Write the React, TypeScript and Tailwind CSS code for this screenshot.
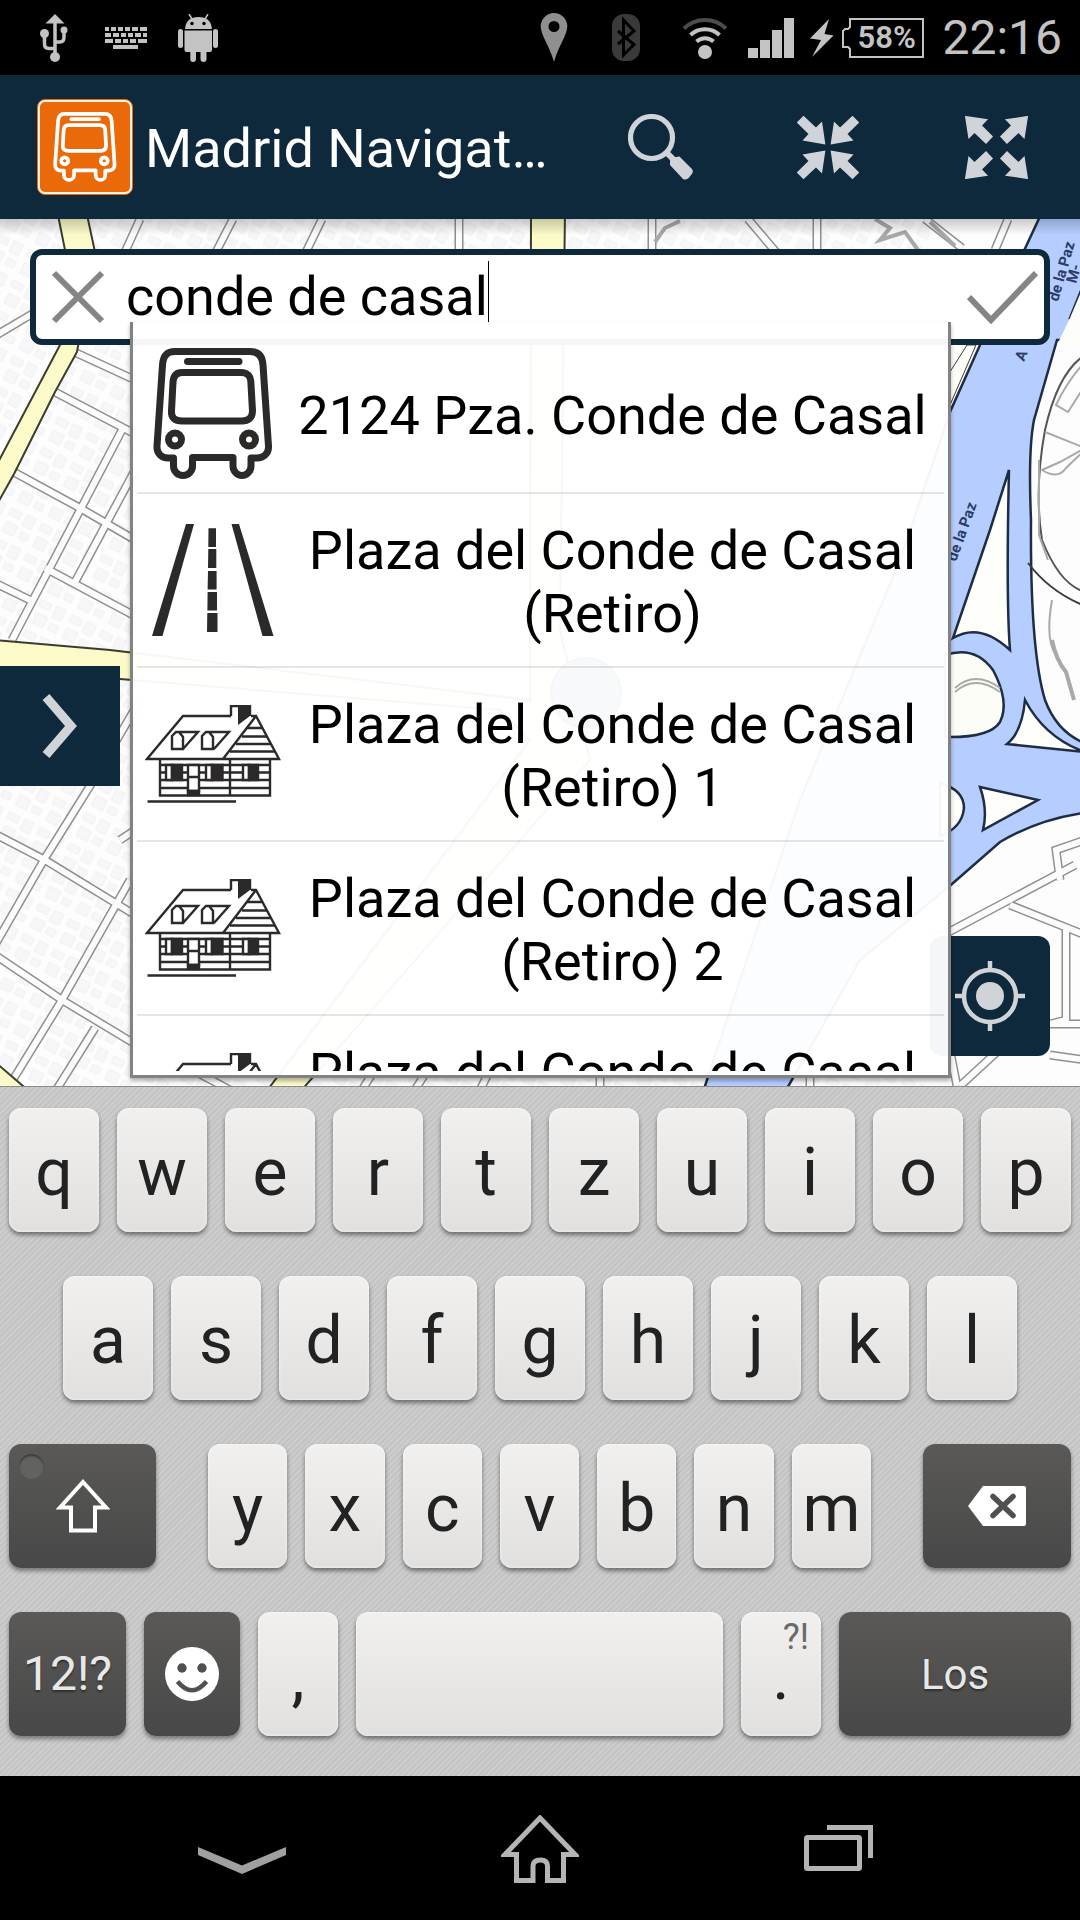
import React, { useState } from 'react';

interface Suggestion {
    kind: 'bus' | 'road' | 'house';
    label: string;
}

const SUGGESTIONS: Suggestion[] = [
    { kind: 'bus', label: '2124 Pza. Conde de Casal' },
    { kind: 'road', label: 'Plaza del Conde de Casal (Retiro)' },
    { kind: 'house', label: 'Plaza del Conde de Casal (Retiro) 1' },
    { kind: 'house', label: 'Plaza del Conde de Casal (Retiro) 2' },
    { kind: 'house', label: 'Plaza del Conde de Casal' },
];

const BusIcon: React.FC<{ className: string }> = ({ className }) => (
    <svg viewBox="0 0 120 131" className={className} fill="none" stroke="currentColor" strokeWidth="7" strokeLinejoin="round">
        <path d="M22 3.5H97C106 3.5 109.5 9 110 17L115.5 98C116 106 110 110 104 110H98V118A9 9.5 0 0 1 80 118V109.5H39.5V118A9.5 9.5 0 0 1 20.5 118V110H15C9 110 3.5 106 4 98L9.5 17C10 9 13 3.5 22 3.5Z" />
        <path d="M34.5 13.5H86" strokeLinecap="round" />
        <path d="M29 24.5H88C95 24.5 97.500 29 97.800 33L99.500 63C99.500 70 95 73 89 73H29C22 73 18 70 18.500 63L20 34C20.500 28 23 24.500 29 24.500Z" />
        <circle cx="22" cy="91.500" r="6.500" />
        <circle cx="96" cy="91.500" r="6.500" />
    </svg>
);

const RoadIcon = () => (
    <svg viewBox="0 0 122 112" className="w-[122px]" fill="currentColor">
        <path d="M34 0H42L10.500 112H0ZM79.500 0H87L121.500 112H110.500Z" />
        <path d="M56.500 4.300H64V23H56.300ZM56.300 25H64.300V44H56ZM56 47H64.600V65.500H55.600ZM55.600 68H65V86.500H55.400ZM55.300 89H65.500V108H55Z" />
    </svg>
);

const HouseIcon = () => (
    <svg viewBox="0 0 136 98" className="w-[136px]" fill="none" stroke="currentColor" strokeWidth="2.400">
        <path d="M86 11H38L2 54H134L111 11H106M111 11L78 54M86 11V1H105V11" />
        <path d="M93 1H105V11L93 20Z" fill="currentColor" stroke="none" />
        <path d="M102 23H117M97 31.500H122M91 39H126M85 46.500H130" />
        <path d="M27 44V31L31 27L34 27L38 32V44ZM31 27H53L38 44M57 44V31L61 27L64 27L68 32V44ZM61 27H84L69 44" />
        <path d="M15 54V90.500H125V54M85 54V90.500M15 60H125M15 67.500H125M15 75H125M15 83H125" />
        <path d="M21 60H27V75H21ZM61 60H67V75H61ZM98 60H104V75H98ZM43 60H54V86H43Z" className="fill-white" />
        <path d="M27 60H37V75H27ZM67 60H77.500V75H67ZM104 60H113V75H104ZM43 86H54V90H43Z" fill="currentColor" />
        <path d="M43 72H54M2.500 96.500H91" />
    </svg>
);

const MapCanvas = () => (
    <svg viewBox="0 219 1080 867" preserveAspectRatio="xMidYMid slice" className="absolute inset-0 size-full bg-[#fdfdfd]" aria-hidden="true">
        <defs>
            <pattern id="plots" width="34" height="34" patternUnits="userSpaceOnUse" patternTransform="rotate(27)">
                <path d="M3 5H15V12H3ZM20 4H30V16H20ZM5 19H17V30H5ZM22 22H31V29H22Z" fill="#f7f7f9" stroke="#f0f0f3" />
            </pattern>
            <linearGradient id="drop" x1="0" y1="0" x2="0" y2="1">
                <stop offset="0" stopColor="#000" stopOpacity=".2" />
                <stop offset="1" stopColor="#000" stopOpacity="0" />
            </linearGradient>
        </defs>
        <rect y="219" width="930" height="867" fill="url(#plots)" />

        {/* narrow streets: grey casing, white core */}
        {['#8f8f8f', '#fcfcfc'].map((stroke, i) => (
            <g key={stroke} fill="none" stroke={stroke} strokeWidth={i === 0 ? 9 : 6}>
                <path d="M70 350L135 380M55 392L135 434M10 470L80 508L135 540M122 430L12 640M135 470L75 582M-5 583L30 600M45 568L135 616M-5 336L32 314" />
                <path d="M140 700L90 786L45 858L-5 945M-5 834L45 860L135 915M130 880L62 1000L14 1078M-5 955L62 1000L135 1044M95 1028L55 1092M120 840L135 830" />
                <path d="M140 219L125 252M233 219L216 252M322 219L306 252M459 215V255M652 215V255M748 219L776 252M817 215V255M925 219L962 248M1008 219L995 250" />
                <path d="M930 942L1075 865M1010 905L1085 935M1066 930V1020L1050 1024H1085M960 1086L1010 1040M940 1000L957 1086M1050 1055L1085 1060M1060 880L1056 850L1085 840" />
                <path d="M200 1074L230 1090M372 1074L362 1090M425 1074L415 1090M488 1074L480 1090M600 1074V1090M810 1074V1090" />
            </g>
        ))}
        <path d="M875 219L890 228L880 240L905 232L918 250M655 242L665 228L680 221M930 222L955 246" fill="none" stroke="#a8a8a8" strokeWidth="4" />

        {/* main avenues */}
        <g fill="#fbfac8" stroke="#3c3c2c" strokeWidth="2">
            <path d="M57 210L66 255L60 345L-5 468V508L14 474L55 392L77 352L95 252L86 210Z" />
            <path d="M531 210H565L560 630L590 760L300 1092H266L530 740L500 710L120 679H-5V640L110 650L530 700Z" />
            <path d="M-5 1062L30 1092H-5Z" />
        </g>

        {/* motorway */}
        <g stroke="#1f2d42" strokeWidth="2.500">
            <path d="M1043 210L980 345L950 412L900 560L800 800L703 1092H785L860 960L952 884L1000 842Q1040 818 1090 812V745Q1058 735 1045 700Q1030 650 1031 520Q1028 450 1034 420L1057 340H1090V318H1070L1090 268V210Z" fill="#b5cdff" />
            <path d="M1009 470L990 530L953 638Q980 622 1010 650Q1006 600 1009 470Z" fill="#fefefa" />
            <path d="M945 655Q975 645 993 670Q1010 702 1000 722Q990 738 945 737Z" fill="#fdfdf8" />
            <path d="M1025 700Q1022 732 1007 744L1085 752Q1045 738 1025 700Z" fill="#fefefa" />
            <path d="M980 787L1038 800L983 830Q988 810 980 787Z" fill="#fefefa" />
            <path d="M940 783Q964 790 964 808Q962 828 940 836Z" fill="#fefefa" />
        </g>
        <path d="M1070 318L1092 266V345H1057Z" fill="#fdfdfa" />
        <path d="M948 375L967 345H976L950 405Z" fill="#fefefa" stroke="#3c3c2c" />
        <path d="M1028 563Q1050 592 1085 606" fill="none" stroke="#3a3a3a" strokeWidth="2" />
        <g fill="none" stroke="#a9a9a9" strokeWidth="2">
            <path d="M1085 355Q1058 372 1045 430Q1034 490 1042 540Q1060 585 1085 592" stroke="#555" />
            <path d="M1085 362Q1068 380 1056 405L1068 412Q1082 390 1085 385M1045 432L1085 448L1060 462L1042 470Q1058 480 1066 468L1085 450" />
            <path d="M1039 460V535L1048 560M1052 600Q1045 640 1056 655M955 692Q975 674 1000 692M955 688Q975 670 1000 688" />
            <path d="M1052 640Q1056 660 1066 672L1074 700" strokeWidth="4" />
        </g>
        <g className="font-[Roboto,sans-serif] text-[15px] font-bold" fill="#2c3c68">
            <text transform="translate(1058 302) rotate(-74)">de la Paz</text>
            <text transform="translate(1076 284) rotate(-74)">M-</text>
            <text transform="translate(1024 362) rotate(-68)">A</text>
            <text transform="translate(956 562) rotate(-70)">de la Paz</text>
        </g>
        <circle cx="586" cy="693" r="35" fill="#4a6076" stroke="#0d293b" strokeWidth="2" />
        <rect y="219" width="1080" height="16" fill="url(#drop)" />
    </svg>
);

const StatusBar = () => (
    <header className="flex h-[75px] items-center justify-between bg-black text-[#c3c3c3]">
        <div className="flex pl-[18px]">
            <span className="flex w-[72px] justify-center">
                <svg viewBox="0 0 28 48" className="h-12 w-7" fill="none" stroke="currentColor" strokeWidth="3.500">
                    <path d="M15 6V44M4.500 20V30Q4.500 34.500 9 34.500H15M24 16V23Q24 28 20 28H15" />
                    <path d="M15 0L24.500 9.500H5.500Z" fill="currentColor" stroke="none" />
                    <circle cx="15" cy="43" r="5" fill="currentColor" stroke="none" />
                    <circle cx="4.500" cy="19.500" r="4.500" fill="currentColor" stroke="none" />
                    <circle cx="24" cy="16" r="3.500" fill="currentColor" stroke="none" />
                </svg>
            </span>
            <span className="flex w-[72px] items-center justify-center">
                <svg viewBox="0 0 42 22" className="w-[42px]" fill="currentColor">
                    <path d="M0 0H4V4H0ZM6 0H11V4H6ZM13 0H18V4H13ZM20 0H25V4H20ZM27 0H33V4H27ZM35 0H42V4H35Z" />
                    <path d="M0 6H6V10H0ZM8 6H14V10H8ZM16 6H21V10H16ZM23 6H28V10H23ZM30 6H36V10H30ZM38 6H42V10H38Z" />
                    <path d="M0 12H8V16H0ZM10 12H16V16H10ZM18 12H23V16H18ZM25 12H31V16H25ZM33 12H42V16H33ZM8 18H33V22H8Z" />
                </svg>
            </span>
            <span className="flex w-[72px] justify-center">
                <svg viewBox="0 0 40 48" className="h-12 w-10" fill="currentColor">
                    <path d="M7 15Q8 3 20.500 3Q33 3 34 15Z" />
                    <path d="M11 0L14 5M30 0L27 5" stroke="currentColor" strokeWidth="1.500" />
                    <path d="M6.500 16.500H34V36Q34 38 32 38H28.500V45Q28.500 48 25.500 48Q22.500 48 22.500 45V38H18V45Q18 48 15 48Q12.300 48 12.300 45V38H8.500Q6.500 38 6.500 36Z" />
                    <rect y="15" width="5" height="19" rx="2.500" />
                    <rect x="35" y="15" width="5" height="19" rx="2.500" />
                    <circle cx="14" cy="9.500" r="1.700" fill="#000" />
                    <circle cx="26" cy="9.500" r="1.700" fill="#000" />
                </svg>
            </span>
        </div>
        <div className="flex items-center pr-[18px]">
            <svg viewBox="0 0 28 49" className="w-7 text-[#8f8f8f]" fill="currentColor">
                <path fillRule="evenodd" d="M14 0A13.300 13.300 0 0 1 27.300 13.300C27.300 22 18 34 14 49C10 34 .7 22 .7 13.300A13.300 13.300 0 0 1 14 0ZM14 8A5.500 5.500 0 1 0 14 19A5.500 5.500 0 1 0 14 8Z" />
            </svg>
            <svg viewBox="0 0 28 47" className="ml-11 w-7" fill="none">
                <rect width="28" height="47" rx="12" fill="#3a3a3a" />
                <path d="M6 17L22 30.500L11.500 41V6L22 17L6 30" stroke="#000" strokeWidth="3" />
            </svg>
            <svg viewBox="0 0 46 43" className="ml-[42px] w-[46px]" fill="none" stroke="currentColor" strokeWidth="4">
                <path d="M2 12.500A30 30 0 0 1 44 12.500" stroke="#4c4c4c" />
                <path d="M8.500 19A21 21 0 0 1 37.500 19M14.500 25.500A12.500 12.500 0 0 1 31.500 25.500" />
                <circle cx="23" cy="36" r="7" fill="currentColor" stroke="none" />
            </svg>
            <svg viewBox="0 0 46 40" className="ml-5 w-[46px]" fill="currentColor">
                <path d="M0 30H10V40H0ZM12 22H22V40H12ZM24 12H34V40H24ZM36 0H46V40H36Z" />
            </svg>
            <svg viewBox="0 0 24 38" className="ml-4 w-6" fill="currentColor">
                <path d="M19 0L0 19.500L11 21L2 38L23.500 16.500L14.500 15Z" />
            </svg>
            <div className="ml-2 grid items-center">
                <svg viewBox="0 0 82 40" className="col-start-1 row-start-1 w-[82px]" fill="none" stroke="currentColor" strokeWidth="2">
                    <path d="M8 1H81V39H8V31L6 29H1V13L3 11H6L8 9Z" />
                </svg>
                <span className="col-start-1 row-start-1 pl-[15px] text-[31px] leading-10 font-semibold">58%</span>
            </div>
            <time className="ml-[18px] text-5xl">22:16</time>
        </div>
    </header>
);

const ActionBar = () => (
    <nav className="flex h-36 items-center bg-[#0d293b] pl-[37px] text-[#d0d4d8]">
        <span className="flex size-24 shrink-0 items-center justify-center rounded-lg border border-[#ea6a0a] bg-[#ea6a0a] text-white outline-2 -outline-offset-3 outline-white/90">
            <BusIcon className="w-16" />
        </span>
        <h1 className="min-w-0 flex-1 truncate pt-1 pl-3 text-[54px] leading-[64px] text-white">Madrid Navigat…</h1>
        <button aria-label="Search" className="flex h-full w-[168px] items-center justify-center">
            <svg viewBox="0 0 65 66" className="w-[65px]" fill="none" stroke="currentColor">
                <circle cx="23.500" cy="23.500" r="21" strokeWidth="5.200" />
                <path d="M38 38L47 47" strokeWidth="6" />
                <path d="M42 44L51.500 42.500L64 55Q66 58 63 61Q59 67 55 65L42 51Z" fill="currentColor" stroke="none" />
            </svg>
        </button>
        <button aria-label="Zoom out" className="flex h-full w-[168px] items-center justify-center">
            <svg viewBox="0 0 62 63" className="w-[62px]" fill="currentColor" stroke="currentColor" strokeWidth="1.500">
                {['', 'matrix(-1 0 0 1 62 0)', 'matrix(1 0 0 -1 0 63)', 'matrix(-1 0 0 -1 62 63)'].map(t => (
                    <path key={t} transform={t} d="M6.500 .8L19 12.500L24.500 7L27.500 27.500L7 24L12.500 18L.8 6.500Z" />
                ))}
            </svg>
        </button>
        <button aria-label="Zoom in" className="flex h-full w-[168px] items-center justify-center">
            <svg viewBox="0 0 63 63" className="w-[63px]" fill="currentColor" stroke="currentColor" strokeWidth="1.500">
                {['', 'matrix(-1 0 0 1 63 0)', 'matrix(1 0 0 -1 0 63)', 'matrix(-1 0 0 -1 63 63)'].map(t => (
                    <path key={t} transform={t} d="M.8 .8L21.500 3.800L16 9.500L27 20.500L21 27L9.500 16L4 21.500Z" />
                ))}
            </svg>
        </button>
    </nav>
);

const SearchPanel = () => {
    const [query, setQuery] = useState('conde de casal');

    return (
        <div className="relative mx-[30px] mt-[30px]">
            <form className="flex h-24 items-center rounded-xl border-6 border-[#0d293b] bg-white" onSubmit={e => e.preventDefault()}>
                <button type="button" aria-label="Clear" onClick={() => setQuery('')} className="flex h-full w-[84px] items-center justify-center text-[#858585]">
                    <svg viewBox="0 0 54 54" className="w-[54px]" stroke="currentColor" strokeWidth="6">
                        <path d="M3 3L51 51M51 3L3 51" />
                    </svg>
                </button>
                <input
                    type="text"
                    aria-label="Search address or stop"
                    value={query}
                    onChange={e => setQuery(e.target.value)}
                    className="field-sizing-content min-w-0 pl-1.5 text-[54px] leading-[64px] text-black caret-transparent outline-none"
                />
                <span className="mb-2 h-16 w-px bg-black" />
                <button type="submit" aria-label="Accept" className="ml-auto flex h-full w-[84px] items-center justify-center text-[#858585]">
                    <svg viewBox="0 0 71 54" className="w-[71px]" fill="none" stroke="currentColor" strokeWidth="6">
                        <path d="M2 27L24 50L69 3" />
                    </svg>
                </button>
            </form>
            <div className="absolute top-[73px] right-[99px] left-[100px] z-20 border-x-3 border-b-3 border-[#828282] bg-white/96 bg-clip-padding px-1 pb-1 shadow-[0_3px_4px_rgba(0,0,0,0.3)]">
                <ul className="max-h-[749px] overflow-hidden">
                    {SUGGESTIONS.map((s, i) => (
                        <li key={s.label} className={i === 0 ? 'border-b-2 border-black/10 pt-3' : 'border-b-2 border-black/10'}>
                            <button className={i === 0 ? 'flex min-h-[158px] w-full px-1 text-[#2b2a29]' : 'flex min-h-[172px] w-full px-1 text-[#2b2a29]'}>
                                <span className="flex w-36 shrink-0 items-center justify-center self-center">
                                    {s.kind === 'bus' && <BusIcon className="w-[120px]" />}
                                    {s.kind === 'road' && <RoadIcon />}
                                    {s.kind === 'house' && <HouseIcon />}
                                </span>
                                <span className={i === 0 ? 'flex-1 self-center pt-1 text-[54px] leading-[63px] text-black' : 'flex-1 pt-[25px] text-[54px] leading-[63px] text-black'}>
                                    {s.label}
                                </span>
                            </button>
                        </li>
                    ))}
                </ul>
            </div>
        </div>
    );
};

const LIGHT_KEY = 'h-31 rounded-xl bg-linear-to-b from-[#f1f0ef] to-[#e1e0df] pt-[5px] text-[66px] leading-[76px] text-[#222] shadow-[0_3px_4px_rgba(0,0,0,0.45),inset_0_0_3px_rgba(255,255,255,0.8)]';
const DARK_KEY = 'h-31 flex items-center justify-center rounded-xl bg-linear-to-b from-[#5a5957] to-[#484848] text-[#e8e8e8] shadow-[0_3px_4px_rgba(0,0,0,0.4)] text-shadow-[0_2px_2px_rgba(0,0,0,0.4)]';

const Keyboard = () => (
    <section aria-label="Keyboard" className="flex flex-col gap-11 border-t border-[#8c8c8c] bg-[#c8c8c8] bg-[repeating-linear-gradient(135deg,#c3c3c3_0px,#c3c3c3_2px,#cdcdcd_2px,#cdcdcd_4px)] px-[9px] pt-[21px] pb-10">
        <div className="flex gap-[18px]">
            {'qwertzuiop'.split('').map(k => <button key={k} className={`${LIGHT_KEY} flex-1`}>{k}</button>)}
        </div>
        <div className="flex gap-[18px] px-[54px]">
            {'asdfghjkl'.split('').map(k => <button key={k} className={`${LIGHT_KEY} flex-1`}>{k}</button>)}
        </div>
        <div className="flex gap-[52px]">
            <button aria-label="Shift" className={`${DARK_KEY} relative w-[147px]`}>
                <span className="absolute top-2.5 left-2.5 size-[25px] rounded-full bg-[#626261] shadow-[inset_0_2px_2px_rgba(0,0,0,0.4)]" />
                <svg viewBox="0 0 54 54" className="w-[54px] text-white" fill="none" stroke="currentColor" strokeWidth="4">
                    <path d="M27 3L50 28.500H39V51.500H15V28.500H4Z" />
                </svg>
            </button>
            <div className="flex flex-1 gap-[18px]">
                {'yxcvbnm'.split('').map(k => <button key={k} className={`${LIGHT_KEY} flex-1`}>{k}</button>)}
            </div>
            <button aria-label="Backspace" className={`${DARK_KEY} w-[148px]`}>
                <svg viewBox="0 0 58 40" className="w-[58px]" fill="none">
                    <path d="M15 0H56Q58 0 58 2V38Q58 40 56 40H15L0 20Z" fill="#fff" />
                    <path d="M25 10.500L45 29.500M45 10.500L25 29.500" stroke="#505050" strokeWidth="5.500" strokeLinecap="round" />
                </svg>
            </button>
        </div>
        <div className="flex gap-[18px]">
            <button className={`${DARK_KEY} w-[117px] text-5xl`}>12!?</button>
            <button aria-label="Emoji" className={`${DARK_KEY} w-24`}>
                <svg viewBox="0 0 54 54" className="w-[54px]" fill="none">
                    <circle cx="27" cy="27" r="27" fill="#fff" />
                    <circle cx="17" cy="21" r="4.700" fill="#505050" />
                    <circle cx="37" cy="21" r="4.700" fill="#505050" />
                    <path d="M12.500 34.500Q27 52 41.500 34.500" stroke="#505050" strokeWidth="4.500" />
                </svg>
            </button>
            <button className={`${LIGHT_KEY} w-20`}>,</button>
            <button aria-label="Space" className={`${LIGHT_KEY} flex-1`} />
            <button className={`${LIGHT_KEY} relative w-20`}>
                <span className="absolute top-1 right-3 text-4xl leading-[42px] text-[#6a6a6a]">?!</span>
                .
            </button>
            <button className={`${DARK_KEY} w-[232px] text-[42px]`}>Los</button>
        </div>
    </section>
);

const NavBar = () => (
    <footer className="flex h-36 items-center justify-center bg-black text-[#b4b4b4]">
        <button aria-label="Hide keyboard" className="flex h-full w-[298px] items-center justify-center pt-6">
            <svg viewBox="0 0 88 27" className="w-[88px] text-[#a0a0a0]" fill="currentColor">
                <path d="M0 0L44 18.500L88 0V8L44 27L0 8Z" />
            </svg>
        </button>
        <button aria-label="Home" className="flex h-full w-[298px] items-center justify-center pt-0.5">
            <svg viewBox="0 0 78 68" className="w-[78px]" fill="none" stroke="currentColor" strokeWidth="5">
                <path d="M39 3L74 39.500H62.500V65.500H46.500V51Q46.500 45 39.500 45Q32 45 32 51V65.500H15.500V39.500H4Z" />
            </svg>
        </button>
        <button aria-label="Recent apps" className="flex h-full w-[298px] items-center justify-center">
            <svg viewBox="0 0 69 46" className="w-[69px]" fill="none" stroke="currentColor" strokeWidth="5">
                <rect x="2.500" y="12.500" width="53" height="31" rx="1" />
                <path d="M23 2.500H66.500V33" />
            </svg>
        </button>
    </footer>
);

export default function App() {
    return (
        <div className="flex min-h-screen flex-col font-[Roboto,sans-serif]">
            <StatusBar />
            <ActionBar />
            <main className="relative min-h-[600px] flex-1 overflow-hidden">
                <MapCanvas />
                <SearchPanel />
                <button aria-label="Open menu" className="absolute top-[447px] left-0 flex h-30 w-30 items-center justify-center bg-[#0d293b] text-[#d0d4d8]">
                    <svg viewBox="0 0 36 64" className="w-9" fill="none" stroke="currentColor" strokeWidth="9">
                        <path d="M4 3L29 32L4 61" />
                    </svg>
                </button>
                <button aria-label="My location" className="absolute right-[30px] bottom-[30px] z-10 flex size-30 items-center justify-center rounded-xl bg-[#0d293b] text-[#d0d4d8]">
                    <svg viewBox="0 0 72 72" className="w-[72px]" fill="none" stroke="currentColor" strokeWidth="4.500">
                        <circle cx="36" cy="36" r="26" />
                        <circle cx="36" cy="36" r="14" fill="currentColor" stroke="none" />
                        <path d="M36 1V10M36 62V71M1 36H10M62 36H71" />
                    </svg>
                </button>
            </main>
            <Keyboard />
            <NavBar />
        </div>
    );
}
